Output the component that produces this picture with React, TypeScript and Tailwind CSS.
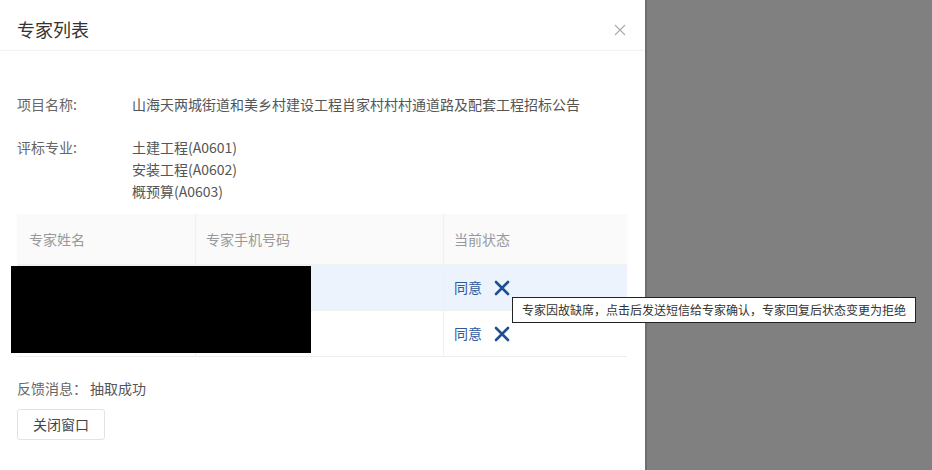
import React from "react";

const font = { fontFamily: '"Noto Sans CJK SC", "Microsoft YaHei", sans-serif' };

function XIcon() {
  return (
    <svg width="16" height="16" viewBox="0 0 16 16" className="block">
      <path d="M2 2 L14 14 M14 2 L2 14" stroke="#1e4f8f" strokeWidth="2.6" strokeLinecap="round" />
    </svg>
  );
}

export default function App() {
  return (
    <div className="flex h-[470px] w-[932px] bg-white" style={font}>
      <div className="relative flex w-[645px] flex-col bg-white">
        <div className="flex h-[51px] items-start justify-between border-b border-[#f3f3f3] pl-[17px] pr-[19px] pt-[17px]">
          <span className="text-[18px] leading-[24px] text-[#333]">专家列表</span>
          <svg width="12" height="12" viewBox="0 0 12 12" className="mt-[7px]">
            <path d="M1 1 L11 11 M11 1 L1 11" stroke="#aaa" strokeWidth="1.1" />
          </svg>
        </div>
        <div className="mt-[42px] flex pl-[17px] text-[14px] leading-[22px] text-[#555]">
          <span className="w-[115px] text-[#666]">项目名称:</span>
          <span>山海天两城街道和美乡村建设工程肖家村村村通道路及配套工程招标公告</span>
        </div>
        <div className="mt-[21px] flex pl-[17px] text-[14px] leading-[22px] text-[#555]">
          <span className="w-[115px] text-[#666]">评标专业:</span>
          <div className="flex flex-col">
            <span>土建工程(A0601)</span>
            <span>安装工程(A0602)</span>
            <span>概预算(A0603)</span>
          </div>
        </div>
        <div className="ml-[17px] mt-[12px] w-[610px] border-b border-[#eee] text-[14px]">
          <div className="flex h-[51px] items-center border-b border-[#f0f0f0] bg-[#fafafa] text-[#999]">
            <div className="flex h-full w-[179px] items-center border-r border-[#f0f0f0] pl-[12px]">专家姓名</div>
            <div className="flex h-full w-[248px] items-center border-r border-[#f0f0f0] pl-[10px]">专家手机号码</div>
            <div className="flex h-full flex-1 items-center pl-[10px]">当前状态</div>
          </div>
          <div className="flex h-[46px] items-center border-b border-[#f0f0f0] bg-[#ecf3fc]">
            <div className="h-full w-[179px] border-r border-[#f0f0f0]"></div>
            <div className="h-full w-[248px] border-r border-[#f0f0f0]"></div>
            <div className="flex h-full flex-1 items-center gap-[12px] pl-[10px] text-[#2c5a9c]">
              <span>同意</span>
              <XIcon />
            </div>
          </div>
          <div className="flex h-[45px] items-center">
            <div className="h-full w-[179px] border-r border-[#f0f0f0]"></div>
            <div className="h-full w-[248px] border-r border-[#f0f0f0]"></div>
            <div className="flex h-full flex-1 items-center gap-[12px] pl-[10px] text-[#2c5a9c]">
              <span>同意</span>
              <XIcon />
            </div>
          </div>
        </div>
        <div className="mt-[20px] flex pl-[17px] text-[14px] leading-[22px] text-[#555]">
          <span className="text-[#666]">反馈消息：</span>
          <span className="ml-[3px]">抽取成功</span>
        </div>
        <div className="ml-[17px] mt-[10px]">
          <button className="h-[31px] w-[88px] rounded-[3px] border border-[#e3e3e3] bg-white text-[14px] text-[#444]">
            关闭窗口
          </button>
        </div>
        <div className="absolute left-[11px] top-[266px] h-[87px] w-[300px] bg-black"></div>
      </div>
      <div className="w-[2px] bg-[#6e6e6e]"></div>
      <div className="flex-1 bg-[#808080]"></div>
      <div className="absolute left-[512px] top-[297px] flex h-[26px] items-center border border-[#222] bg-white px-[9px] text-[12px] text-[#333]">
        专家因故缺席，点击后发送短信给专家确认，专家回复后状态变更为拒绝
      </div>
    </div>
  );
}
